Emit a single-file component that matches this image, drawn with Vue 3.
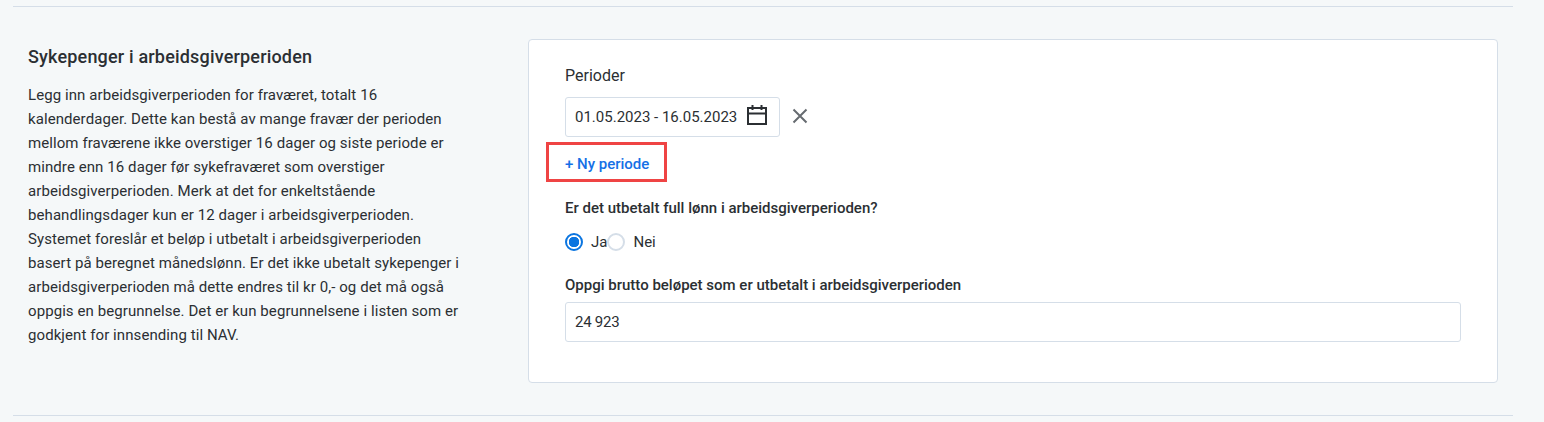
<script setup>
const intro = 'Legg inn arbeidsgiverperioden for fraværet, totalt 16 kalenderdager. Dette kan bestå av mange fravær der perioden mellom fraværene ikke overstiger 16 dager og siste periode er mindre enn 16 dager før sykefraværet som overstiger arbeidsgiverperioden. Merk at det for enkeltstående behandlingsdager kun er 12 dager i arbeidsgiverperioden. Systemet foreslår et beløp i utbetalt i arbeidsgiverperioden basert på beregnet månedslønn. Er det ikke ubetalt sykepenger i arbeidsgiverperioden må dette endres til kr 0,- og det må også oppgis en begrunnelse. Det er kun begrunnelsene i listen som er godkjent for innsending til NAV.'
</script>

<template>
  <div class="page">
    <section class="section">
      <div class="intro">
        <h2 class="title">Sykepenger i arbeidsgiverperioden</h2>
        <p class="text">{{ intro }}</p>
      </div>
      <div class="card">
        <div class="label">Perioder</div>
        <div class="period-row">
          <div class="date-field">
            <span>01.05.2023 - 16.05.2023</span>
            <svg class="calendar" width="20" height="20" viewBox="0 0 20 20" fill="none" stroke="#2b2f33" stroke-width="2">
              <rect x="1" y="3" width="18" height="16" />
              <path d="M1 8.500h18M5.500 0v5M14.500 0v5" />
            </svg>
          </div>
          <svg class="close" width="16" height="16" viewBox="0 0 16 16" fill="none" stroke="#666b70" stroke-width="2">
            <path d="M1.500 1.500l13 13M14.500 1.500l-13 13" />
          </svg>
        </div>
        <div class="add-box"><span class="add">+ Ny periode</span></div>
        <div class="question">Er det utbetalt full lønn i arbeidsgiverperioden?</div>
        <div class="radios">
          <span class="radio on"></span><span class="radio-text">Ja</span>
          <span class="radio"></span><span class="radio-text nei">Nei</span>
        </div>
        <div class="question amount">Oppgi brutto beløpet som er utbetalt i arbeidsgiverperioden</div>
        <div class="amount-field">24 923</div>
      </div>
    </section>
  </div>
</template>

<style>
html, body { background: #f5f8f9; }
</style>

<style scoped>
.page {
  padding: 6px 31px 0 13px;
  font-family: Roboto, "Liberation Sans", sans-serif;
  color: #2b2f33;
}
.section {
  display: flex;
  align-items: flex-start;
  height: 410px;
  padding: 32px 15px 0;
  box-sizing: border-box;
  border-top: 1px solid #d5dee8;
  border-bottom: 1px solid #d5dee8;
}
.intro { width: 435px; margin-right: 65px; }
.title {
  margin: 7px 0 0;
  font-size: 18px;
  font-weight: 500;
  line-height: 22px;
  letter-spacing: 0.18px;
}
.text {
  margin: 15px 0 0;
  font-size: 15px;
  line-height: 24px;
  letter-spacing: 0.08px;
}
.card {
  width: 970px;
  height: 344px;
  box-sizing: border-box;
  padding: 26px 36px 0;
  background: #fff;
  border: 1px solid #d5dee8;
  border-radius: 4px;
}
.label { font-size: 16px; line-height: 20px; }
.period-row {
  display: flex;
  align-items: center;
  margin-top: 11px;
}
.date-field {
  display: flex;
  align-items: center;
  justify-content: space-between;
  width: 215px;
  height: 40px;
  box-sizing: border-box;
  padding: 0 12px 0 9px;
  font-size: 15px;
  border: 1px solid #d5dee8;
  border-radius: 3px;
}
.calendar { margin-bottom: 4px; }
.close { margin: 0 0 2px 12px; }
.add-box {
  width: 121px;
  height: 40px;
  box-sizing: border-box;
  margin: 5px 0 0 -19px;
  padding: 4px 0 0 16px;
  display: flex;
  align-items: center;
  border: 3px solid #ef4444;
}
.add { font-size: 15px; font-weight: 500; color: #1570e6; }
.question {
  margin-top: 16px;
  font-size: 15px;
  font-weight: 500;
  line-height: 20px;
}
.radios {
  display: flex;
  align-items: center;
  margin-top: 15px;
  height: 18px;
  font-size: 15px;
}
.radio {
  width: 18px;
  height: 18px;
  box-sizing: border-box;
  border: 2px solid #d5dee8;
  border-radius: 50%;
  background: #fff;
}
.radio.on {
  border: 2px solid #0b75e0;
  background: radial-gradient(circle, #0b75e0 0 5px, #fff 5.500px);
}
.radio-text { margin-left: 8px; }
.radio-text.nei { margin-left: 8px; }
.amount { margin-top: 24px; }
.amount-field {
  display: flex;
  align-items: center;
  height: 40px;
  box-sizing: border-box;
  margin-top: 7px;
  padding-left: 9px;
  font-size: 15px;
  letter-spacing: -0.25px;
  border: 1px solid #d5dee8;
  border-radius: 3px;
}
</style>
